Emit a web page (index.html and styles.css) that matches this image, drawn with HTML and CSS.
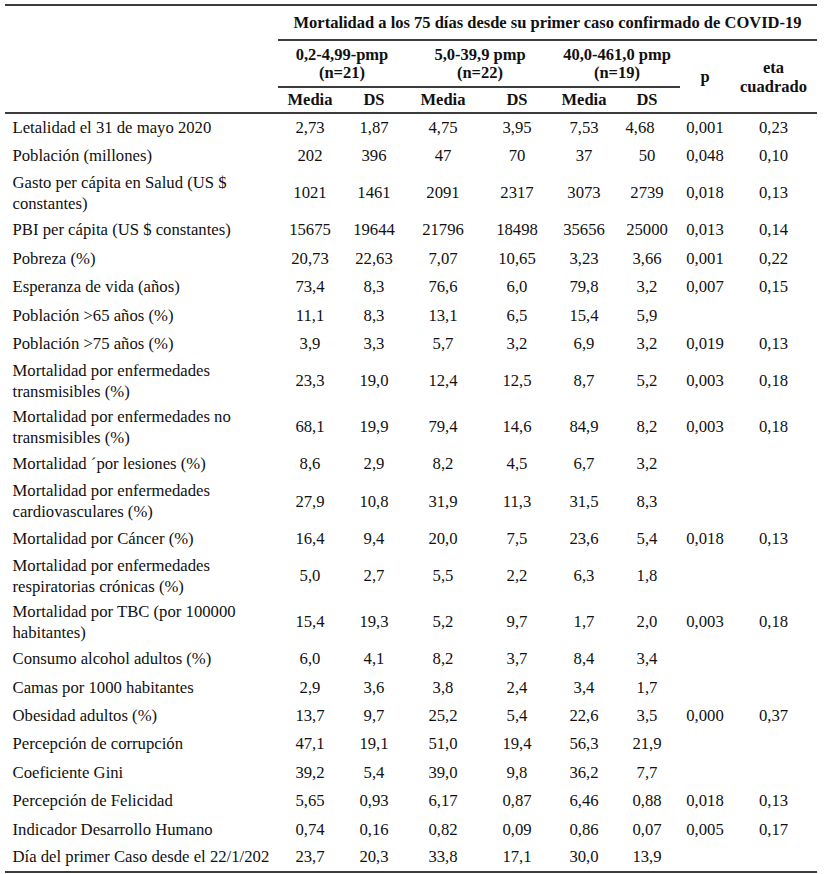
FILE: index.html
```html
<!DOCTYPE html>
<html lang="es">
<head>
<meta charset="utf-8">
<title>Tabla COVID-19</title>
<link rel="stylesheet" href="styles.css">
</head>
<body>
<table class="stats">
  <colgroup>
    <col class="c-label">
    <col class="c-m1"><col class="c-d1">
    <col class="c-m2"><col class="c-d2">
    <col class="c-m3"><col class="c-d3">
    <col class="c-p"><col class="c-eta">
  </colgroup>
  <thead>
    <tr class="h-title">
      <th class="corner" rowspan="3"></th>
      <th class="title" colspan="8">Mortalidad a los 75 días desde su primer caso confirmado de COVID-19</th>
    </tr>
    <tr class="h-group">
      <th class="group" colspan="2">0,2-4,99-pmp<br>(n=21)</th>
      <th class="group" colspan="2">5,0-39,9 pmp<br>(n=22)</th>
      <th class="group" colspan="2">40,0-461,0 pmp<br>(n=19)</th>
      <th class="side" rowspan="2">p</th>
      <th class="side eta" rowspan="2">eta<br>cuadrado</th>
    </tr>
    <tr class="h-sub">
      <th>Media</th><th>DS</th>
      <th>Media</th><th>DS</th>
      <th>Media</th><th>DS</th>
    </tr>
  </thead>
  <tbody>
    <tr><td class="label">Letalidad el 31 de mayo 2020</td><td>2,73</td><td>1,87</td><td>4,75</td><td>3,95</td><td>7,53</td><td class="off">4,68</td><td>0,001</td><td>0,23</td></tr>
    <tr><td class="label">Población (millones)</td><td>202</td><td>396</td><td>47</td><td>70</td><td>37</td><td>50</td><td>0,048</td><td>0,10</td></tr>
    <tr class="two"><td class="label">Gasto per cápita en Salud (US $<br>constantes)</td><td>1021</td><td>1461</td><td>2091</td><td>2317</td><td>3073</td><td>2739</td><td>0,018</td><td>0,13</td></tr>
    <tr><td class="label">PBI per cápita (US $ constantes)</td><td>15675</td><td>19644</td><td>21796</td><td>18498</td><td>35656</td><td>25000</td><td>0,013</td><td>0,14</td></tr>
    <tr><td class="label">Pobreza (%)</td><td>20,73</td><td>22,63</td><td>7,07</td><td>10,65</td><td>3,23</td><td>3,66</td><td>0,001</td><td>0,22</td></tr>
    <tr><td class="label">Esperanza de vida (años)</td><td>73,4</td><td>8,3</td><td>76,6</td><td>6,0</td><td>79,8</td><td>3,2</td><td>0,007</td><td>0,15</td></tr>
    <tr><td class="label">Población &gt;65 años (%)</td><td>11,1</td><td>8,3</td><td>13,1</td><td>6,5</td><td>15,4</td><td>5,9</td><td></td><td></td></tr>
    <tr><td class="label">Población &gt;75 años (%)</td><td>3,9</td><td>3,3</td><td>5,7</td><td>3,2</td><td>6,9</td><td>3,2</td><td>0,019</td><td>0,13</td></tr>
    <tr class="two"><td class="label">Mortalidad por enfermedades<br>transmisibles (%)</td><td>23,3</td><td>19,0</td><td>12,4</td><td>12,5</td><td>8,7</td><td>5,2</td><td>0,003</td><td>0,18</td></tr>
    <tr class="two"><td class="label">Mortalidad por enfermedades no<br>transmisibles (%)</td><td>68,1</td><td>19,9</td><td>79,4</td><td>14,6</td><td>84,9</td><td>8,2</td><td>0,003</td><td>0,18</td></tr>
    <tr><td class="label">Mortalidad ´por lesiones (%)</td><td>8,6</td><td>2,9</td><td>8,2</td><td>4,5</td><td>6,7</td><td>3,2</td><td></td><td></td></tr>
    <tr class="two"><td class="label">Mortalidad por enfermedades<br>cardiovasculares (%)</td><td>27,9</td><td>10,8</td><td>31,9</td><td>11,3</td><td>31,5</td><td>8,3</td><td></td><td></td></tr>
    <tr><td class="label">Mortalidad por Cáncer (%)</td><td>16,4</td><td>9,4</td><td>20,0</td><td>7,5</td><td>23,6</td><td>5,4</td><td>0,018</td><td>0,13</td></tr>
    <tr class="two"><td class="label">Mortalidad por enfermedades<br>respiratorias crónicas (%)</td><td>5,0</td><td>2,7</td><td>5,5</td><td>2,2</td><td>6,3</td><td>1,8</td><td></td><td></td></tr>
    <tr class="two"><td class="label">Mortalidad por TBC (por 100000<br>habitantes)</td><td>15,4</td><td>19,3</td><td>5,2</td><td>9,7</td><td>1,7</td><td>2,0</td><td>0,003</td><td>0,18</td></tr>
    <tr><td class="label">Consumo alcohol adultos (%)</td><td>6,0</td><td>4,1</td><td>8,2</td><td>3,7</td><td>8,4</td><td>3,4</td><td></td><td></td></tr>
    <tr><td class="label">Camas por 1000 habitantes</td><td>2,9</td><td>3,6</td><td>3,8</td><td>2,4</td><td>3,4</td><td>1,7</td><td></td><td></td></tr>
    <tr><td class="label">Obesidad adultos (%)</td><td>13,7</td><td>9,7</td><td>25,2</td><td>5,4</td><td>22,6</td><td>3,5</td><td>0,000</td><td>0,37</td></tr>
    <tr><td class="label">Percepción de corrupción</td><td>47,1</td><td>19,1</td><td>51,0</td><td>19,4</td><td>56,3</td><td>21,9</td><td></td><td></td></tr>
    <tr><td class="label">Coeficiente Gini</td><td>39,2</td><td>5,4</td><td>39,0</td><td>9,8</td><td>36,2</td><td>7,7</td><td></td><td></td></tr>
    <tr><td class="label">Percepción de Felicidad</td><td>5,65</td><td>0,93</td><td>6,17</td><td>0,87</td><td>6,46</td><td>0,88</td><td>0,018</td><td>0,13</td></tr>
    <tr><td class="label">Indicador Desarrollo Humano</td><td>0,74</td><td>0,16</td><td>0,82</td><td>0,09</td><td>0,86</td><td>0,07</td><td>0,005</td><td>0,17</td></tr>
    <tr><td class="label">Día del primer Caso desde el 22/1/202</td><td>23,7</td><td>20,3</td><td>33,8</td><td>17,1</td><td>30,0</td><td>13,9</td><td></td><td></td></tr>
  </tbody>
</table>
</body>
</html>
```

FILE: styles.css
```css
html, body {
  margin: 0;
  padding: 0;
  background: #ffffff;
}

body {
  padding: 4px 0 0 5px;
  font-family: "Liberation Serif", "Tinos", "DejaVu Serif", serif;
  color: #111111;
}

.stats {
  border-collapse: collapse;
  table-layout: fixed;
  width: 812px;
  font-size: 16.7px;
  border-top: 2px solid #3c3c3c;
  border-bottom: 2px solid #3c3c3c;
}

.c-label { width: 273px; }
.c-m1 { width: 64px; }
.c-d1 { width: 64px; }
.c-m2 { width: 74px; }
.c-d2 { width: 74px; }
.c-m3 { width: 60px; }
.c-d3 { width: 66px; }
.c-p { width: 50px; }
.c-eta { width: 87px; }

.stats th {
  font-weight: bold;
  font-size: 16.5px;
  text-align: center;
  vertical-align: middle;
  padding: 0;
}

.h-title { height: 35px; }
.h-group { height: 47px; }
.h-sub { height: 26px; }

.title {
  border-bottom: 2px solid #3c3c3c;
  line-height: 20px;
  padding-top: 1px;
}

.group {
  line-height: 18px;
  border-bottom: 2px solid #3c3c3c;
}

.side {
  line-height: 19px;
}

.eta {
  padding-left: 2px;
}

.h-sub th,
.corner,
.side {
  border-bottom: 2px solid #3c3c3c;
}

.stats tbody tr { height: 28.4px; }

.stats tbody tr.two { height: 46px; }

.stats td {
  padding: 2px 0;
  line-height: 21px;
  text-align: center;
  vertical-align: middle;
  white-space: nowrap;
}

.stats td.label {
  text-align: left;
  padding-left: 7.5px;
}

.stats td.off {
  padding-right: 14px;
}
```
